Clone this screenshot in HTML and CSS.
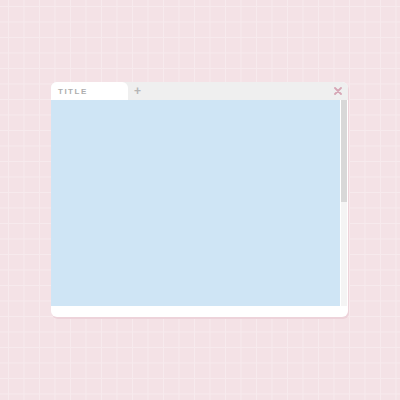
FILE: index.html
```html
<!DOCTYPE html>
<html>
<head>
<meta charset="utf-8">
<link rel="stylesheet" href="styles.css">
</head>
<body>
<div class="window">
  <div class="tabbar">
    <div class="tab"><span class="tab-title">TITLE</span></div>
    <div class="add">+</div>
    <div class="spacer"></div>
    <svg class="close" width="8" height="8" viewBox="0 0 8 8"><path d="M1 1L7 7M7 1L1 7" stroke="#d6a6b5" stroke-width="1.8" stroke-linecap="round"/></svg>
  </div>
  <div class="main">
    <div class="content"></div>
    <div class="scroll"><div class="thumb"></div></div>
  </div>
  <div class="footer"></div>
</div>
</body>
</html>
```
FILE: styles.css
```css
html, body { margin: 0; padding: 0; }
body {
  width: 400px;
  height: 400px;
  overflow: hidden;
  background-color: #f4e2e6;
  background-image:
    linear-gradient(to right, #f7eaed 1px, transparent 1px),
    linear-gradient(to bottom, #f7eaed 1px, transparent 1px);
  background-size: 15.5px 15.5px;
  background-position: 8px 6px;
  font-family: "Liberation Sans", Arial, sans-serif;
  padding-top: 82px;
  box-sizing: border-box;
}
.window {
  width: 297px;
  height: 235px;
  margin-left: 51px;
  background: #fff;
  border-radius: 6px;
  box-shadow: 1px 2px 0 #edd3da;
  display: flex;
  flex-direction: column;
  overflow: hidden;
}
.tabbar {
  height: 18px;
  background: #efefef;
  display: flex;
  align-items: center;
}
.tab {
  width: 77px;
  height: 18px;
  background: #fff;
  border-radius: 0 6px 0 0;
  display: flex;
  align-items: center;
  padding-left: 7px;
  box-sizing: border-box;
}
.tab-title {
  font-size: 8px;
  font-weight: bold;
  letter-spacing: 1.5px;
  color: #adadad;
}
.add {
  margin-left: 6px;
  font-size: 12px;
  font-weight: bold;
  color: #b5b5b5;
  line-height: 1;
}
.spacer { flex: 1; }
.close { margin-right: 6px; }
.main {
  height: 206px;
  display: flex;
}
.content {
  width: 289px;
  background: #cfe5f5;
}
.scroll {
  width: 6px;
  margin-left: 1px;
  background: #f4f4f4;
}
.thumb {
  height: 102px;
  background: #d8d8d8;
}
.footer { flex: 1; }
```
